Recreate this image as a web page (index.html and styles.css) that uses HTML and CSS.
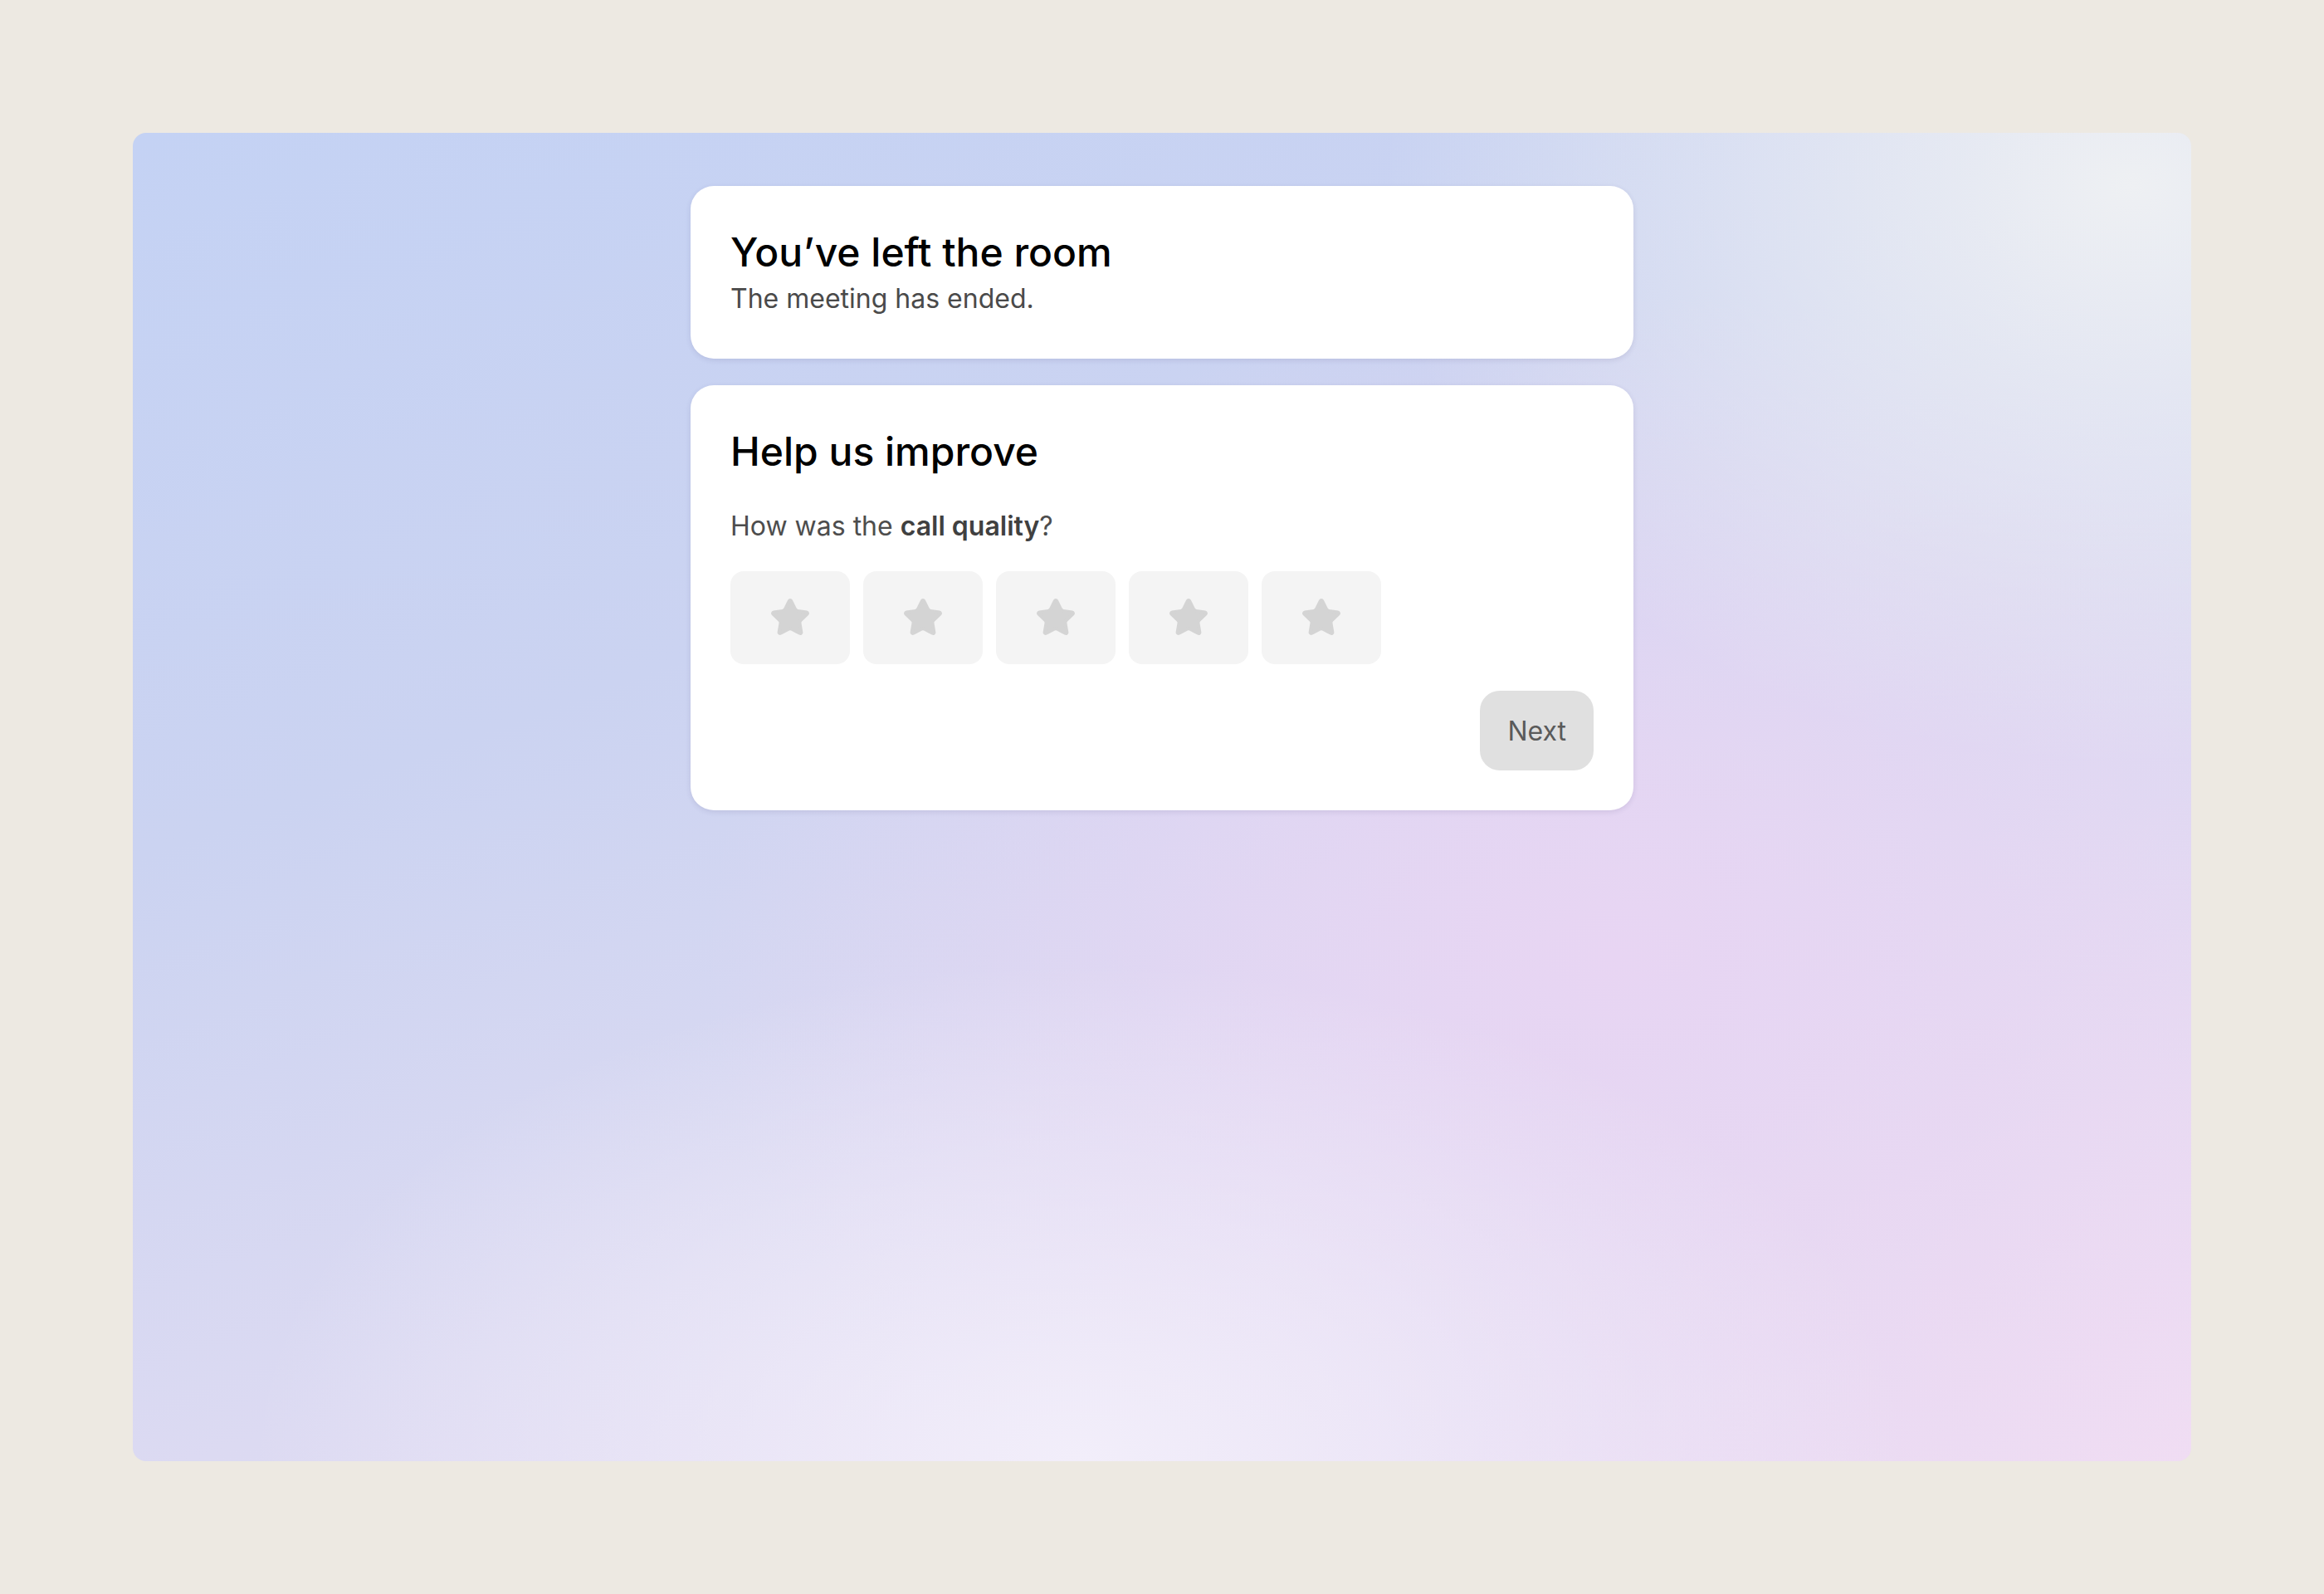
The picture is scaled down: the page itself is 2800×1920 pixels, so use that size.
FILE: index.html
```html
<!DOCTYPE html>
<html lang="en">
<head>
  <meta charset="UTF-8" />
  <meta name="viewport" content="width=device-width, initial-scale=1.0"/>
  <title>Meeting ended</title>
  <link rel="stylesheet" href="styles.css">
</head>
<body>
  <div class="stage">
    <div class="card">
      <h1 class="card-title">You’ve left the room</h1>
      <p class="card-sub">The meeting has ended.</p>
    </div>

    <div class="card">
      <h2 class="card-title">Help us improve</h2>
      <p class="question">How was the <strong>call quality</strong>?</p>

      <div class="rating" id="rating">
        <button class="star-btn" data-value="1"><svg viewBox="0 0 24 24"><path d="M11.525 2.295a.53.53 0 0 1 .95 0l2.31 4.679a2.123 2.123 0 0 0 1.595 1.16l5.166.756a.53.53 0 0 1 .294.904l-3.736 3.638a2.123 2.123 0 0 0-.611 1.878l.882 5.14a.53.53 0 0 1-.771.56l-4.618-2.428a2.122 2.122 0 0 0-1.973 0L6.396 21.01a.53.53 0 0 1-.77-.56l.881-5.139a2.122 2.122 0 0 0-.611-1.879L2.16 9.795a.53.53 0 0 1 .294-.906l5.165-.755a2.122 2.122 0 0 0 1.597-1.16z"/></svg></button>
        <button class="star-btn" data-value="2"><svg viewBox="0 0 24 24"><path d="M11.525 2.295a.53.53 0 0 1 .95 0l2.31 4.679a2.123 2.123 0 0 0 1.595 1.16l5.166.756a.53.53 0 0 1 .294.904l-3.736 3.638a2.123 2.123 0 0 0-.611 1.878l.882 5.14a.53.53 0 0 1-.771.56l-4.618-2.428a2.122 2.122 0 0 0-1.973 0L6.396 21.01a.53.53 0 0 1-.77-.56l.881-5.139a2.122 2.122 0 0 0-.611-1.879L2.16 9.795a.53.53 0 0 1 .294-.906l5.165-.755a2.122 2.122 0 0 0 1.597-1.16z"/></svg></button>
        <button class="star-btn" data-value="3"><svg viewBox="0 0 24 24"><path d="M11.525 2.295a.53.53 0 0 1 .95 0l2.31 4.679a2.123 2.123 0 0 0 1.595 1.16l5.166.756a.53.53 0 0 1 .294.904l-3.736 3.638a2.123 2.123 0 0 0-.611 1.878l.882 5.14a.53.53 0 0 1-.771.56l-4.618-2.428a2.122 2.122 0 0 0-1.973 0L6.396 21.01a.53.53 0 0 1-.77-.56l.881-5.139a2.122 2.122 0 0 0-.611-1.879L2.16 9.795a.53.53 0 0 1 .294-.906l5.165-.755a2.122 2.122 0 0 0 1.597-1.16z"/></svg></button>
        <button class="star-btn" data-value="4"><svg viewBox="0 0 24 24"><path d="M11.525 2.295a.53.53 0 0 1 .95 0l2.31 4.679a2.123 2.123 0 0 0 1.595 1.16l5.166.756a.53.53 0 0 1 .294.904l-3.736 3.638a2.123 2.123 0 0 0-.611 1.878l.882 5.14a.53.53 0 0 1-.771.56l-4.618-2.428a2.122 2.122 0 0 0-1.973 0L6.396 21.01a.53.53 0 0 1-.77-.56l.881-5.139a2.122 2.122 0 0 0-.611-1.879L2.16 9.795a.53.53 0 0 1 .294-.906l5.165-.755a2.122 2.122 0 0 0 1.597-1.16z"/></svg></button>
        <button class="star-btn" data-value="5"><svg viewBox="0 0 24 24"><path d="M11.525 2.295a.53.53 0 0 1 .95 0l2.31 4.679a2.123 2.123 0 0 0 1.595 1.16l5.166.756a.53.53 0 0 1 .294.904l-3.736 3.638a2.123 2.123 0 0 0-.611 1.878l.882 5.14a.53.53 0 0 1-.771.56l-4.618-2.428a2.122 2.122 0 0 0-1.973 0L6.396 21.01a.53.53 0 0 1-.77-.56l.881-5.139a2.122 2.122 0 0 0-.611-1.879L2.16 9.795a.53.53 0 0 1 .294-.906l5.165-.755a2.122 2.122 0 0 0 1.597-1.16z"/></svg></button>
      </div>

      <div class="actions">
        <button class="next-btn" id="nextBtn">Next</button>
      </div>
    </div>
  </div>
</body>
</html>
```

FILE: styles.css
```css
body {
    margin: 0;
    padding: 160px;
    background-color: #ede9e2;
    font-family: Inter, "Noto Sans", sans-serif;
}
.stage {
    height: 1600px;
    box-sizing: border-box;
    padding-top: 64px;
    border-radius: 16px;
    display: flex;
    flex-direction: column;
    align-items: center;
    gap: 32px;
    background-color: #d6d8f2;
    background-image:
        radial-gradient(ellipse 900px 700px at 97% 4%, #eef0f3 0%, rgba(238, 240, 243, 0) 100%),
        radial-gradient(ellipse 1000px 600px at 46% 100%, #f2eefa 0%, rgba(242, 238, 250, 0) 100%),
        radial-gradient(ellipse 1100px 800px at 72% 62%, #e8d5f3 0%, rgba(232, 213, 243, 0) 100%),
        radial-gradient(ellipse 900px 800px at 100% 100%, #f0ddf3 0%, rgba(240, 221, 243, 0) 100%),
        linear-gradient(160deg, #c4d2f4 0%, #cbd3f1 35%, #dcdaf2 65%, #e9dcf3 100%);
}
.card {
    width: 1136px;
    box-sizing: border-box;
    padding: 48px;
    background-color: #ffffff;
    border-radius: 28px;
    box-shadow: 0 2px 6px rgba(60, 50, 110, 0.12);
}
.card-title {
    margin: 0;
    font-size: 48px;
    line-height: 64px;
    font-weight: 500;
    color: #000000;
}
.card-sub {
    margin: 0;
    font-size: 32px;
    line-height: 48px;
    color: #4a4a4a;
}
.question {
    margin: 34px 0 0;
    font-size: 32px;
    line-height: 48px;
    color: #4d4d4d;
}
.question strong {
    font-weight: 600;
    color: #404040;
}
.rating {
    display: flex;
    gap: 16px;
    margin-top: 30px;
}
.star-btn {
    width: 144px;
    height: 112px;
    padding: 0;
    border: none;
    border-radius: 16px;
    background-color: #f4f4f4;
    display: flex;
    align-items: center;
    justify-content: center;
    cursor: pointer;
}
.star-btn svg {
    width: 50px;
    height: 50px;
    fill: #d4d4d4;
    stroke: #d4d4d4;
    stroke-width: 2;
    stroke-linejoin: round;
}
.actions {
    display: flex;
    justify-content: flex-end;
    margin-top: 32px;
}
.next-btn {
    height: 96px;
    padding: 0 33px;
    border: none;
    border-radius: 24px;
    background-color: #e0e0e0;
    color: #5a5a5a;
    font-family: Inter, "Noto Sans", sans-serif;
    font-size: 32px;
    cursor: pointer;
}
```
